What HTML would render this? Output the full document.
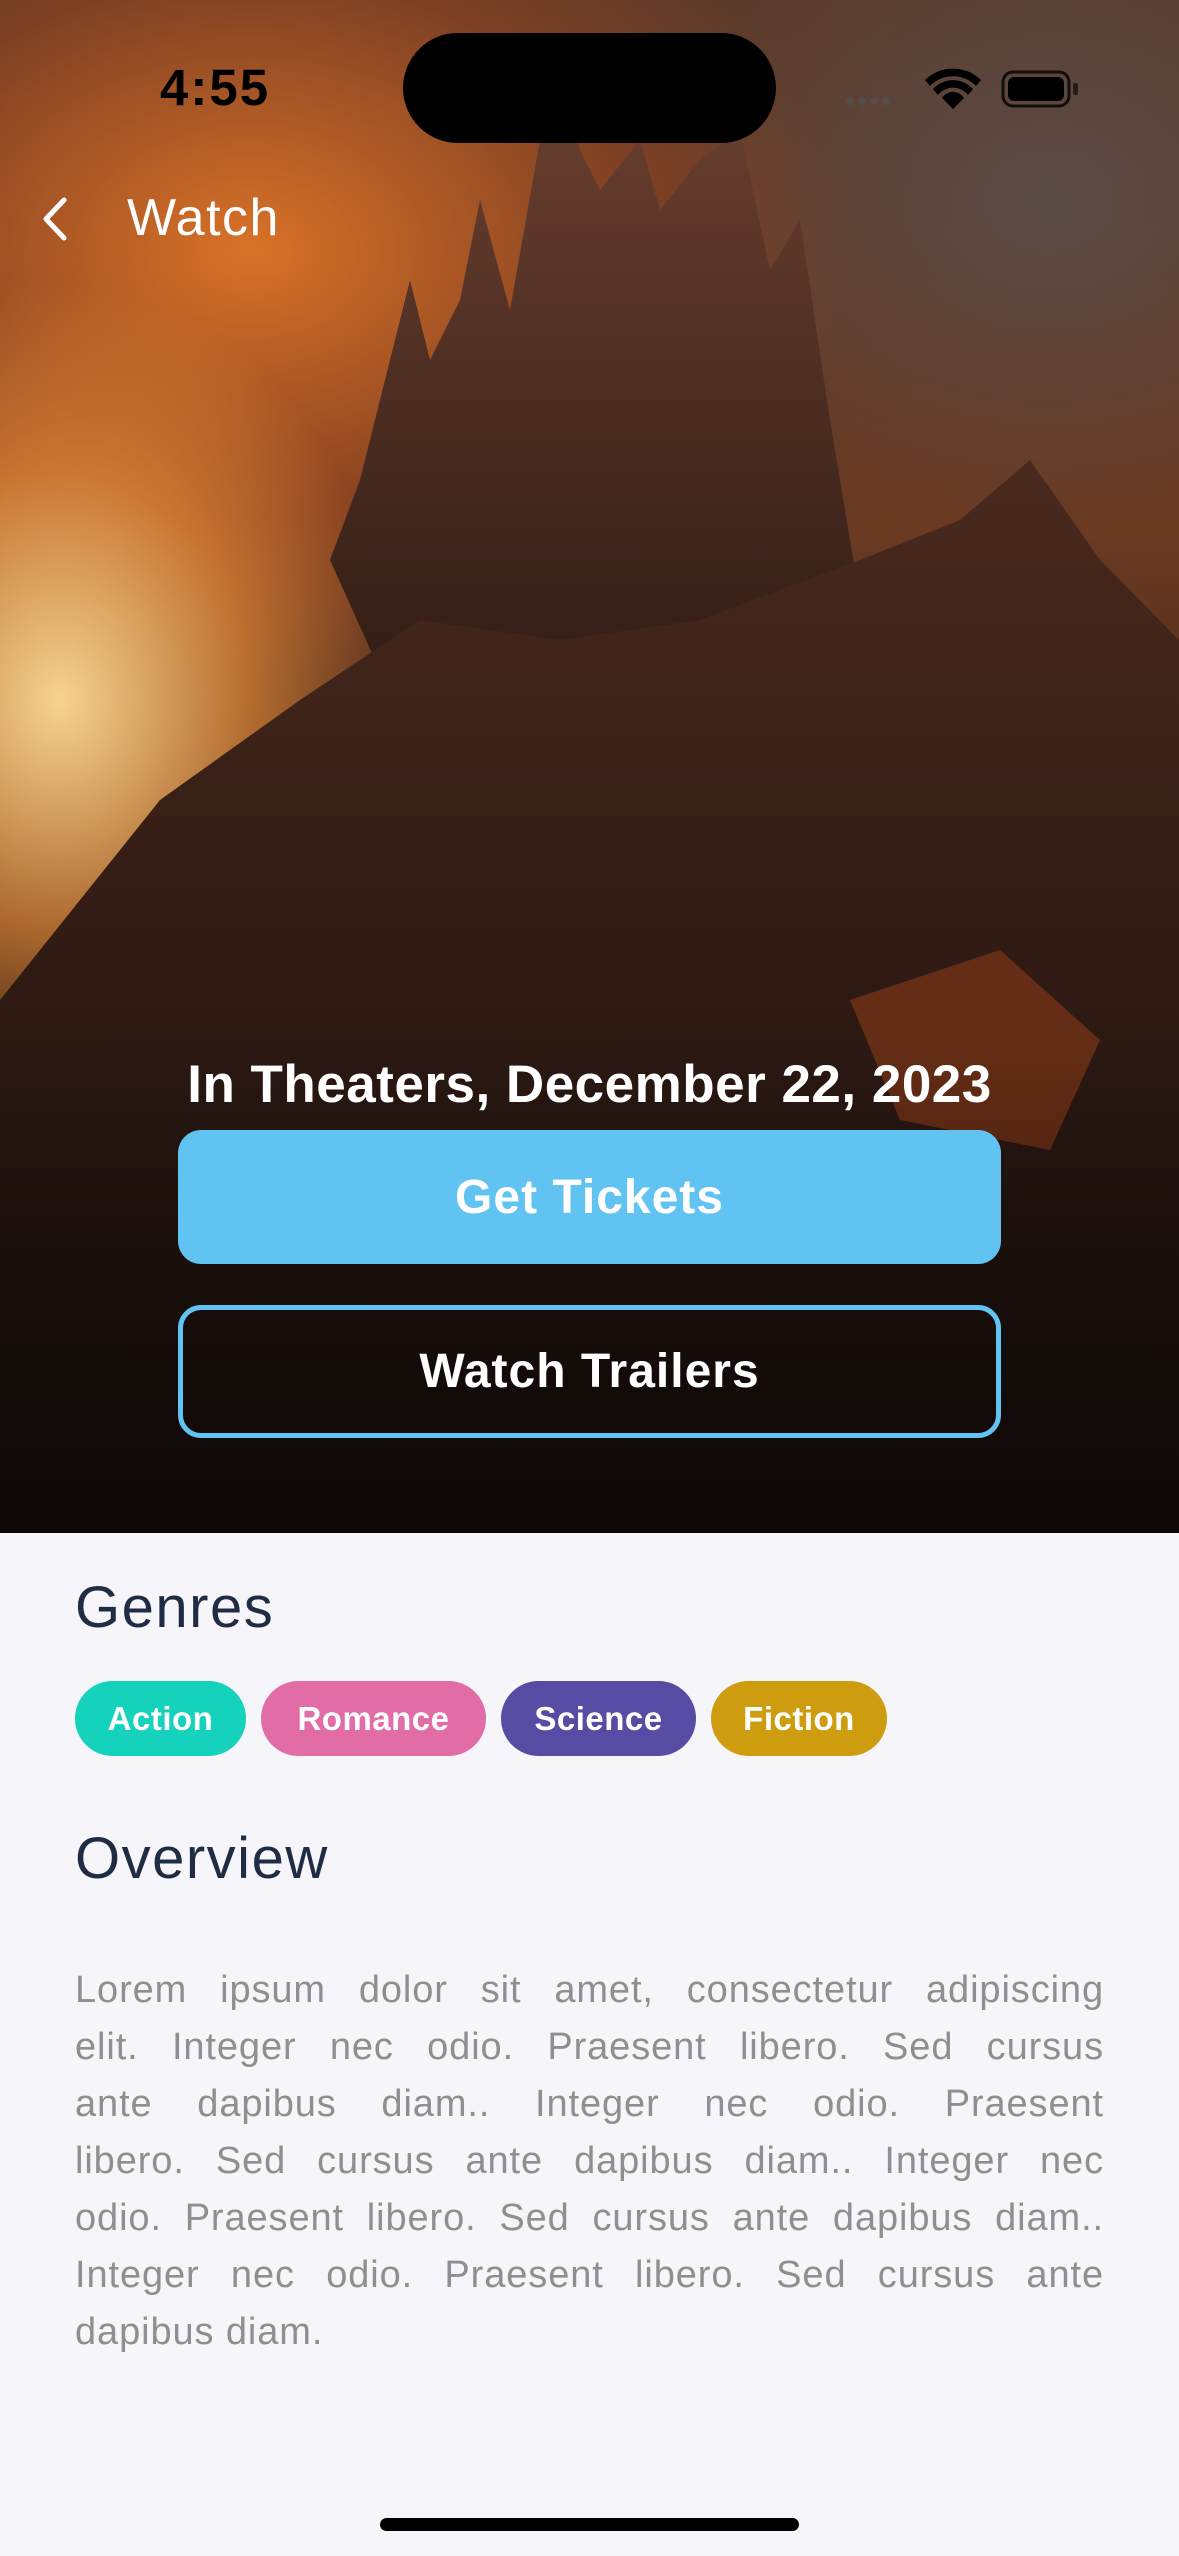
<!DOCTYPE html>
<html><head><meta charset="utf-8"><style>
*{margin:0;padding:0;box-sizing:border-box}
body{width:1179px;height:2556px;background:#F5F5FA;font-family:"Liberation Sans",sans-serif;position:relative;overflow:hidden}
.hero{position:absolute;left:0;top:0;width:1179px;height:1533px;overflow:hidden;
background:
radial-gradient(ellipse 420px 520px at 60px 700px,rgba(255,220,150,.95),rgba(245,150,60,.6) 45%,rgba(0,0,0,0) 80%),
radial-gradient(ellipse 700px 500px at 250px 250px,rgba(230,120,40,.9),rgba(160,70,30,.5) 55%,rgba(0,0,0,0) 85%),
radial-gradient(ellipse 500px 400px at 1050px 200px,rgba(90,80,80,.8),rgba(0,0,0,0) 80%),
linear-gradient(180deg,#5a3a2a 0%,#6a3a22 35%,#3a2016 60%,#1d120e 80%,#120b09 100%);}
.a{position:absolute}
.chip{position:absolute;top:1681px;height:75px;border-radius:38px;color:#fff;font-weight:bold;font-size:33px;display:flex;align-items:center;justify-content:center;letter-spacing:.5px}
.btn{position:absolute;left:178px;width:823px;border-radius:23px;display:flex;align-items:center;justify-content:center;color:#fff;font-weight:bold;font-size:48px;letter-spacing:1px}
.ov{position:absolute;left:75px;top:1962px;width:1029px;font-size:38px;line-height:57px;color:#8e8e93;letter-spacing:.9px}
.ov div{text-align:justify;text-align-last:justify;white-space:nowrap;height:57px}
</style></head><body>
<div class="hero">
<svg class="a" style="left:0;top:0" width="1179" height="1533" viewBox="0 0 1179 1533">
<defs><linearGradient id="c" x1="0" y1="0" x2="0" y2="1"><stop offset="0" stop-color="#6b4030"/><stop offset="1" stop-color="#2a1812"/></linearGradient>
<linearGradient id="m" x1="0" y1="0" x2="0" y2="1"><stop offset="0" stop-color="#4a2a1e"/><stop offset="1" stop-color="#120a08"/></linearGradient></defs>
<polygon fill="url(#c)" points="330,560 360,480 390,360 410,280 430,360 460,300 480,200 510,310 540,140 560,80 580,150 600,190 640,140 660,210 700,160 740,130 770,270 800,220 830,420 860,600 700,760 420,760"/>
<polygon fill="url(#m)" points="0,1000 160,800 300,700 420,620 560,640 700,620 860,560 960,520 1030,460 1100,560 1179,640 1179,1533 0,1533"/>
<polygon fill="#8a3a18" opacity=".6" points="850,1000 1000,950 1100,1040 1050,1150 900,1120"/>
</svg>
<div class="a" style="left:0;top:1050px;width:1179px;height:483px;background:linear-gradient(180deg,rgba(0,0,0,0),rgba(10,6,5,.6))"></div>
</div>
<div class="a" style="left:160px;top:58px;font-size:51px;font-weight:bold;color:#000;letter-spacing:2px">4:55</div>
<div class="a" style="left:403px;top:33px;width:373px;height:110px;border-radius:55px;background:#000"></div>
<svg class="a" style="left:845px;top:66px" width="240" height="44" viewBox="0 0 240 44">
<g fill="#555" opacity=".6"><circle cx="5" cy="35" r="4"/><circle cx="17" cy="35" r="4"/><circle cx="29" cy="35" r="4"/><circle cx="41" cy="35" r="4"/></g>
<path d="M80 14 a40 40 0 0 1 56 0 l-5 6 a32 32 0 0 0 -46 0z M88 23 a27 27 0 0 1 40 0 l-5 6 a19 19 0 0 0 -30 0z M97 32 a13 13 0 0 1 22 0 l-11 11z" fill="#000"/>
<rect x="158" y="6" width="66" height="34" rx="10" fill="none" stroke="#000" stroke-width="3" opacity=".8"/>
<rect x="163" y="11" width="56" height="24" rx="6" fill="#000"/>
<rect x="228" y="17" width="5" height="12" rx="2" fill="#000" opacity=".6"/>
</svg>
<svg class="a" style="left:40px;top:196px" width="30" height="46" viewBox="0 0 30 46"><path d="M24 4 L6 23 L24 42" fill="none" stroke="#fff" stroke-width="5" stroke-linecap="round" stroke-linejoin="round"/></svg>
<div class="a" style="left:127px;top:188px;font-size:52px;color:#fff;letter-spacing:1.5px">Watch</div>
<div class="a" style="left:0;top:1054px;width:1179px;text-align:center;font-size:53px;font-weight:bold;color:#fff;letter-spacing:.5px">In Theaters, December 22, 2023</div>
<div class="btn" style="top:1130px;height:134px;background:#61C3F2">Get Tickets</div>
<div class="btn" style="top:1305px;height:133px;border:5px solid #61C3F2">Watch Trailers</div>
<div class="a" style="left:75px;top:1574px;font-size:58px;color:#202C43;letter-spacing:1.5px">Genres</div>
<div class="chip" style="left:75px;width:171px;background:#15D2BC">Action</div>
<div class="chip" style="left:261px;width:225px;background:#E26CA5">Romance</div>
<div class="chip" style="left:501px;width:195px;background:#564CA3">Science</div>
<div class="chip" style="left:711px;width:176px;background:#CD9D0F">Fiction</div>
<div class="a" style="left:75px;top:1825px;font-size:58px;color:#202C43;letter-spacing:1.5px">Overview</div>
<div class="ov">
<div>Lorem ipsum dolor sit amet, consectetur adipiscing</div>
<div>elit. Integer nec odio. Praesent libero. Sed cursus</div>
<div>ante dapibus diam.. Integer nec odio. Praesent</div>
<div>libero. Sed cursus ante dapibus diam.. Integer nec</div>
<div>odio. Praesent libero. Sed cursus ante dapibus diam..</div>
<div>Integer nec odio. Praesent libero. Sed cursus ante</div>
<div style="text-align-last:left">dapibus diam.</div>
</div>
<div class="a" style="left:380px;top:2518px;width:419px;height:13px;border-radius:7px;background:#000"></div>
</body></html>
